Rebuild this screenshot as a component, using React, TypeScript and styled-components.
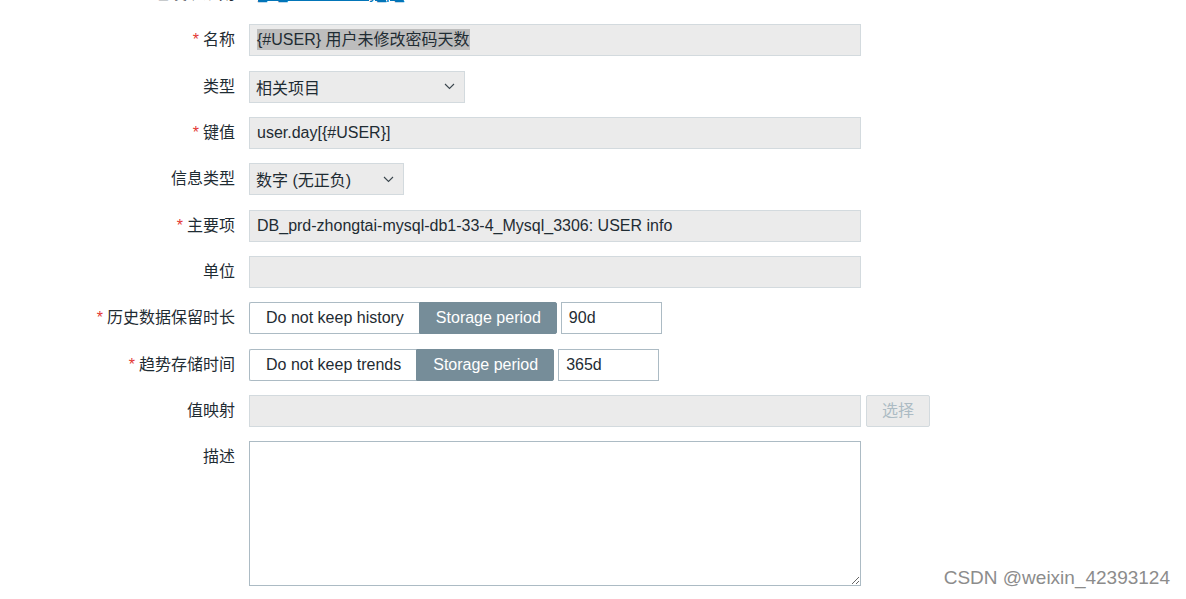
import React from 'react';
import styled, { createGlobalStyle } from 'styled-components';

const GlobalStyle = createGlobalStyle`
    body {
        margin: 0;
        background: #ffffff;
        font-family: "Liberation Sans", Arial, "Noto Sans CJK SC", sans-serif;
        font-size: 16px;
        color: #1f2c33;
        overflow: hidden;
    }
`;

const Page = styled.div`
    position: relative;
    width: 1186px;
    height: 599px;
    overflow: hidden;
`;

const Form = styled.div`
    display: grid;
    grid-template-columns: 235px 1fr;
    column-gap: 14px;
    row-gap: 14.35px;
    margin-top: -22px;
`;

const Label = styled.div`
    height: 32px;
    line-height: 32px;
    text-align: right;
    white-space: nowrap;
`;

const Required = styled.span`
    color: #e33734;
    margin-right: 4px;
`;

const FieldRow = styled.div`
    display: flex;
    align-items: center;
    gap: 4px;
    min-height: 32px;
`;

const TextField = styled.div<{ $width?: number; $readonly?: boolean }>`
    box-sizing: border-box;
    width: ${(p) => p.$width ?? 612}px;
    height: 32px;
    padding: 0 7px;
    line-height: 30px;
    border: 1px solid ${(p) => (p.$readonly ? '#d3dade' : '#acbbc4')};
    background: ${(p) => (p.$readonly ? '#ebebeb' : '#ffffff')};
    white-space: nowrap;
    overflow: hidden;
`;

const Selected = styled.span`
    background: #bdbdbd;
    padding: 2px 0;
`;

const Select = styled.div<{ $width: number }>`
    box-sizing: border-box;
    width: ${(p) => p.$width}px;
    height: 32px;
    padding: 0 9px 0 6px;
    display: flex;
    align-items: center;
    justify-content: space-between;
    border: 1px solid #d3dade;
    background: #ebebeb;
`;

const Segmented = styled.div`
    display: flex;
    height: 32px;
`;

const Segment = styled.div<{ $active?: boolean }>`
    box-sizing: border-box;
    height: 32px;
    padding: 0 15px 0 16px;
    line-height: 30px;
    white-space: nowrap;
    border: 1px solid ${(p) => (p.$active ? '#768d99' : '#acbbc4')};
    background: ${(p) => (p.$active ? '#768d99' : '#ffffff')};
    color: ${(p) => (p.$active ? '#ffffff' : '#1f2c33')};
    border-radius: ${(p) => (p.$active ? '0 2px 2px 0' : '2px 0 0 2px')};
    ${(p) => (p.$active ? '' : 'border-right: none;')}
`;

const DisabledButton = styled.div`
    box-sizing: border-box;
    height: 32px;
    padding: 0 15px;
    line-height: 30px;
    margin-left: 1px;
    border: 1px solid #d3dade;
    border-radius: 2px;
    background: #ebebeb;
    color: #acbbc4;
`;

const TextArea = styled.textarea`
    box-sizing: border-box;
    width: 612px;
    height: 145px;
    border: 1px solid #acbbc4;
    background: #ffffff;
    resize: both;
    font: inherit;
    margin: 0;
    display: block;
`;

const Link = styled.a`
    color: #0275b8;
    text-decoration: underline;
    line-height: 32px;
    margin-left: 9px;
`;

const Watermark = styled.div`
    position: absolute;
    right: 16px;
    top: 567px;
    font-size: 19px;
    color: #8c8c8c;
`;

const Chevron = () => (
    <svg width="11" height="7" viewBox="0 0 11 7">
        <path d="M1 1 L5.5 5.5 L10 1" fill="none" stroke="#3a464d" strokeWidth="1.1" />
    </svg>
);

const App = () => (
    <Page>
        <GlobalStyle />
        <Form>
            <Label>已发现规则</Label>
            <FieldRow>
                <Link>_D_USER list by_p_</Link>
            </FieldRow>

            <Label>
                <Required>*</Required>名称
            </Label>
            <FieldRow>
                <TextField $readonly>
                    <Selected>{'{#USER} 用户未修改密码天数'}</Selected>
                </TextField>
            </FieldRow>

            <Label>类型</Label>
            <FieldRow>
                <Select $width={216}>
                    相关项目
                    <Chevron />
                </Select>
            </FieldRow>

            <Label>
                <Required>*</Required>键值
            </Label>
            <FieldRow>
                <TextField $readonly>{'user.day[{#USER}]'}</TextField>
            </FieldRow>

            <Label>信息类型</Label>
            <FieldRow>
                <Select $width={155}>
                    数字 (无正负)
                    <Chevron />
                </Select>
            </FieldRow>

            <Label>
                <Required>*</Required>主要项
            </Label>
            <FieldRow>
                <TextField $readonly>DB_prd-zhongtai-mysql-db1-33-4_Mysql_3306: USER info</TextField>
            </FieldRow>

            <Label>单位</Label>
            <FieldRow>
                <TextField $readonly />
            </FieldRow>

            <Label>
                <Required>*</Required>历史数据保留时长
            </Label>
            <FieldRow>
                <Segmented>
                    <Segment>Do not keep history</Segment>
                    <Segment $active>Storage period</Segment>
                </Segmented>
                <TextField $width={101}>90d</TextField>
            </FieldRow>

            <Label>
                <Required>*</Required>趋势存储时间
            </Label>
            <FieldRow>
                <Segmented>
                    <Segment>Do not keep trends</Segment>
                    <Segment $active>Storage period</Segment>
                </Segmented>
                <TextField $width={101}>365d</TextField>
            </FieldRow>

            <Label>值映射</Label>
            <FieldRow>
                <TextField $readonly />
                <DisabledButton>选择</DisabledButton>
            </FieldRow>

            <Label>描述</Label>
            <FieldRow>
                <TextArea defaultValue="" />
            </FieldRow>
        </Form>
        <Watermark>CSDN @weixin_42393124</Watermark>
    </Page>
);

export default App;
